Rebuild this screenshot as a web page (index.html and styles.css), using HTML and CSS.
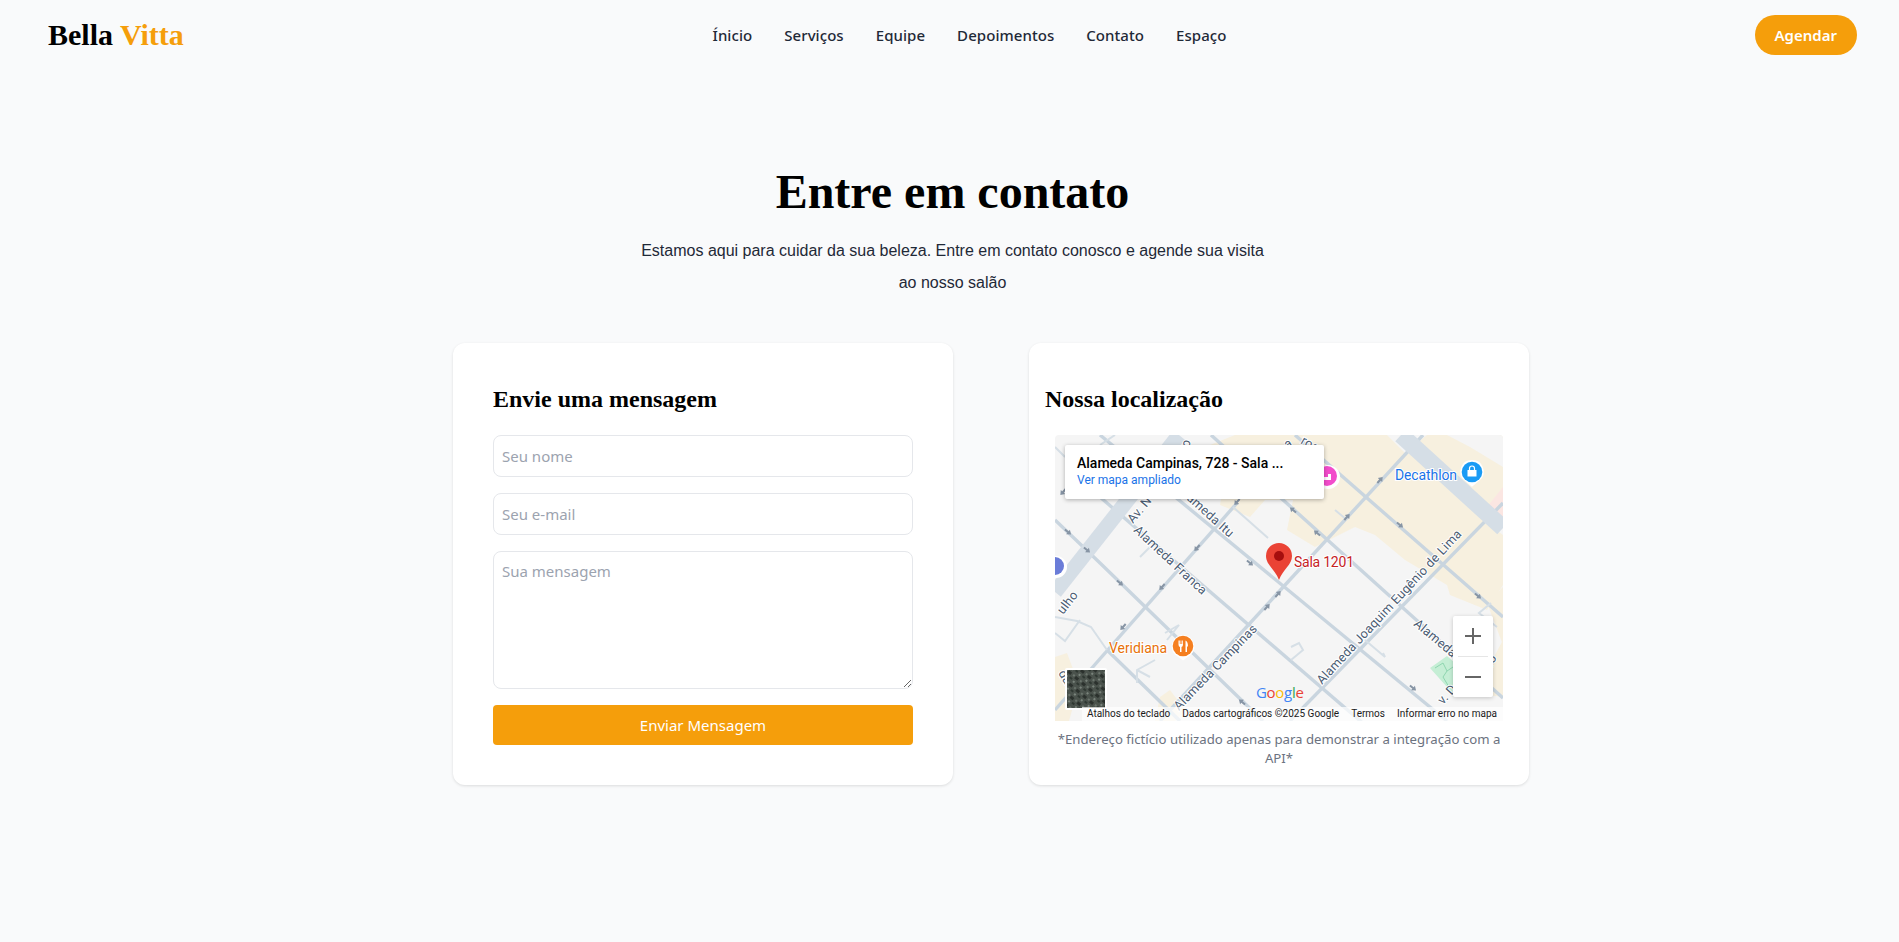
FILE: index.html
```html
<!DOCTYPE html>
<html lang="pt-BR">
<head>
  <meta charset="UTF-8" />
  <meta name="viewport" content="width=device-width, initial-scale=1.0" />
  <title>Bella Vitta</title>
  <link rel="stylesheet" href="styles.css">
</head>
<body>
  <header class="header">
    <a class="logo" href="#">Bella <span>Vitta</span></a>
    <nav class="nav">
      <a href="#">Ínicio</a>
      <a href="#">Serviços</a>
      <a href="#">Equipe</a>
      <a href="#">Depoimentos</a>
      <a href="#">Contato</a>
      <a href="#">Espaço</a>
    </nav>
    <a class="btn-agendar" href="#">Agendar</a>
  </header>

  <main class="contato">
    <h1>Entre em contato</h1>
    <p class="intro">Estamos aqui para cuidar da sua beleza. Entre em contato conosco e agende sua visita<br>ao nosso salão</p>

    <div class="cards">
      <section class="card card-form">
        <h2>Envie uma mensagem</h2>
        <form class="form">
          <input type="text" placeholder="Seu nome" />
          <input type="email" placeholder="Seu e-mail" />
          <textarea placeholder="Sua mensagem"></textarea>
          <button type="button">Enviar Mensagem</button>
        </form>
      </section>

      <section class="card card-mapa">
        <h2>Nossa localização</h2>
        <div class="mapa">
          <svg class="mapa-svg" width="448" height="286" viewBox="0 0 448 286">
            <defs>
              <path id="seta" d="M-4 -1h4v-2l4 3l-4 3v-2h-4z" fill="#8795a5" />
              <pattern id="sat" width="9" height="9" patternUnits="userSpaceOnUse" patternTransform="rotate(40)">
                <rect width="9" height="9" fill="#4a524c" />
                <rect width="4" height="3" fill="#2b312d" />
                <rect x="5" y="4" width="3" height="2" fill="#2f3832" />
                <rect x="1" y="5" width="2" height="2" fill="#79837b" />
                <rect x="6" y="0" width="2" height="2" fill="#6a746c" />
              </pattern>
            </defs>
            <rect width="448" height="286" fill="#f5f5f5" />

            <!-- quadras -->
            <polygon fill="#f7f0df" points="180,0 332,0 350,18 372,0 448,0 448,60 428,85 448,100 448,150 432,175 395,160 392,150 350,125 320,100 300,92 260,112 232,95 238,65 210,65 195,82 165,70 170,40 130,20" />
            <polygon fill="#f5f5f5" points="392,0 448,0 448,32 415,12" />
            <polygon fill="#fbe6e2" points="432,72 448,52 448,88" />
            <polygon fill="#f7f0df" points="0,222 12,218 24,250 14,286 0,286" />
            <polygon fill="#f7f0df" points="105,262 115,255 130,275 120,286 100,286" />
            <polygon fill="#f7f0df" points="432,168 448,152 448,210" />
            <polygon fill="#f7f0df" points="432,235 448,205 448,262 432,260" />
            <polygon fill="#c5eed5" points="375,233 392,221 400,228 398,262 392,252" />
            <path d="M380 233L388 228L392 236L388 242M392 236L398 232M388 242L394 252" fill="none" stroke="#8fd6b0" stroke-width="1" />

            <!-- ruas -->
            <g fill="none" stroke="#c9d5df" stroke-width="3.4">
              <path d="M45 0L392 286" />
              <path d="M45 62L310 290" />
              <path d="M0 85L45 128L208 286" />
              <path d="M156 0L448 263" />
              <path d="M240 0L448 182" />
              <path d="M52 215L125 286" />
              <path d="M448 68L235 286" />
              <path d="M368 0L105 286" />
              <path d="M182 68L0 275" />
            </g>
            <g fill="none" stroke="#d6dfe6" stroke-width="2">
              <path d="M178 72L213 103" />
              <path d="M85 122L95 112" />
              <path d="M280 75L292 85" />
              <path d="M0 182L22 186L36 192L52 215" />
              <path d="M0 198L10 206L25 185" />
              <path d="M82 248L82 235L100 225M82 235L95 242" />
              <path d="M110 198L124 190L112 205" />
              <path d="M236 225L248 215L244 208L236 212" />
              <path d="M310 205L330 222L328 218" />
              <path d="M45 95L52 90" />
              <path d="M436 168L424 178L442 192" />
              <path d="M0 12L10 22M60 0L45 10" />
            </g>
            <path d="M0 157L124 0" fill="none" stroke="#d5dee6" stroke-width="15" />
            <path d="M346 0L448 93" fill="none" stroke="#d5dee6" stroke-width="17" />

            <g class="setas">
              <use href="#seta" transform="translate(13 97) rotate(40)" />
              <use href="#seta" transform="translate(32 115) rotate(40)" />
              <use href="#seta" transform="translate(65 148) rotate(40)" />
              <use href="#seta" transform="translate(195 128) rotate(40)" />
              <use href="#seta" transform="translate(345 90) rotate(40)" />
              <use href="#seta" transform="translate(423 161) rotate(40)" />
              <use href="#seta" transform="translate(358 253) rotate(40)" />
              <use href="#seta" transform="translate(262 98) rotate(220)" />
              <use href="#seta" transform="translate(238 75) rotate(220)" />
              <use href="#seta" transform="translate(187 267) rotate(220)" />
              <use href="#seta" transform="translate(292 82) rotate(-48)" />
              <use href="#seta" transform="translate(325 45) rotate(-48)" />
              <use href="#seta" transform="translate(212 172) rotate(-48)" />
              <use href="#seta" transform="translate(223 159) rotate(-48)" />
              <use href="#seta" transform="translate(107 152) rotate(132)" />
              <use href="#seta" transform="translate(142 113) rotate(132)" />
              <use href="#seta" transform="translate(182 67) rotate(132)" />
              <use href="#seta" transform="translate(68 192) rotate(132)" />
              <use href="#seta" transform="translate(8 57) rotate(132)" />
            </g>

            <!-- nomes das ruas -->
            <g class="rua">
              <text transform="translate(78 89) rotate(-50)">Av. N</text>
              <text transform="translate(8 180) rotate(-52)">ulho</text>
              <text transform="translate(134 13) rotate(-75)">o</text>
              <text transform="translate(131 64) rotate(42)">ameda Itu</text>
              <text transform="translate(78 96) rotate(43)">Alameda Franca</text>
              <text transform="translate(124 276) rotate(-46)">Alameda Campinas</text>
              <text transform="translate(267 250) rotate(-47)">Alameda Joaquim Eugênio de Lima</text>
              <text transform="translate(358 190) rotate(40)">Alameda</text>
              <text transform="translate(3 238) rotate(60)">da</text>
              <text transform="translate(232 14) rotate(-30)">a</text>
              <text transform="translate(245 8) rotate(30)">ros</text>
              <text transform="translate(437 233) rotate(-65)">ro</text>
              <text transform="translate(388 270) rotate(-48)">v. D</text>
            </g>

            <!-- pontos -->
            <g class="poi">
              <path d="M417 26a10.500 10.500 0 0 1 7 18.500l-7 6l-7 -6a10.500 10.500 0 0 1 7 -18.500z" fill="#fff" stroke="#fff" stroke-width="2" />
              <circle cx="417" cy="37" r="10.300" fill="#1a9bf5" />
              <path d="M412.500 35h9v6.500h-9z" fill="#fff" />
              <path d="M414.500 35v-1.500a2.500 2.500 0 0 1 5 0v1.500" fill="none" stroke="#fff" stroke-width="1.200" />
              <circle cx="273" cy="42" r="12" fill="#fff" />
              <circle cx="272" cy="41" r="10" fill="#f24ccb" />
              <path d="M264 39h4v3h5v-3h3v6h-12z" fill="#fff" />
              <circle cx="1" cy="132" r="11" fill="#fff" />
              <circle cx="0" cy="131" r="9" fill="#6a7cd8" />
              <path d="M128 200a11.500 11.500 0 0 1 8 19.500l-8 6l-8 -6a11.500 11.500 0 0 1 8 -19.500z" fill="#fff" />
              <circle cx="128" cy="211" r="10.300" fill="#f57f20" />
              <path d="M123.500 205.500v4q0 2 1.500 2.500v5h1.500v-5q1.500 -.5 1.500 -2.500v-4h-.8v3.500h-.8v-3.500h-.8v3.500h-.8v-3.500zM130.500 205.500q2.500 1 2.500 6h-1v5.500h-1.500z" fill="#fff" />
            </g>
            <path d="M224 108a13 13 0 0 1 13 13c0 9 -9 13 -13 24c-4 -11 -13 -15 -13 -24a13 13 0 0 1 13 -13z" fill="#ea4335" />
            <circle cx="224" cy="121" r="5" fill="#a50e0e" />

            <g class="rotulo">
              <text x="340" y="45" fill="#1a73e8" textLength="62">Decathlon</text>
              <text x="239" y="132" fill="#c5221f" textLength="60">Sala 1201</text>
              <text x="54" y="218" fill="#e8710a" textLength="58">Veridiana</text>
            </g>

            <rect x="10" y="233" width="42" height="42" rx="2" fill="#fff" />
            <rect x="12" y="235" width="38" height="38" fill="url(#sat)" />
          </svg>

          <div class="mapa-info">
            <strong>Alameda Campinas, 728 - Sala ...</strong>
            <a href="#">Ver mapa ampliado</a>
          </div>

          <div class="mapa-zoom">
            <span class="zoom-mais"></span>
            <i></i>
            <span class="zoom-menos"></span>
          </div>

          <div class="mapa-google"><b class="g-blue">G</b><b class="g-red">o</b><b class="g-yellow">o</b><b class="g-blue">g</b><b class="g-green">l</b><b class="g-red">e</b></div>

          <div class="mapa-rodape">
            <span>Atalhos do teclado</span>
            <span>Dados cartográficos ©2025 Google</span>
            <span>Termos</span>
            <span>Informar erro no mapa</span>
          </div>
        </div>
        <p class="aviso">*Endereço fictício utilizado apenas para demonstrar a integração com a API*</p>
      </section>
    </div>
  </main>
</body>
</html>
```

FILE: styles.css
```css
* {
  box-sizing: border-box;
  margin: 0;
  padding: 0;
}

body {
  background-color: #f9fafb;
  color: #1f2937;
  font-family: "Noto Sans", "Open Sans", sans-serif;
  min-height: 100vh;
}

a {
  text-decoration: none;
  color: inherit;
}

/* topo */
.header {
  display: grid;
  grid-template-columns: 1fr auto 1fr;
  align-items: center;
  height: 70px;
  padding: 0 42px 0 48px;
}

.logo {
  font-family: "Liberation Serif", serif;
  font-size: 30px;
  font-weight: bold;
  color: #000;
}

.logo span {
  color: #f59e0b;
}

.nav {
  display: flex;
  gap: 32px;
  font-size: 15px;
  font-weight: 500;
  letter-spacing: 0.06px;
  margin-left: 34px;
}

.btn-agendar {
  justify-self: end;
  height: 40px;
  line-height: 40px;
  padding: 0 20px;
  border-radius: 20px;
  background-color: #f59e0b;
  color: #fff;
  font-size: 15px;
  font-weight: 600;
}

/* contato */
.contato {
  padding: 0 42px 0 48px;
}

h1 {
  font-family: "Liberation Serif", serif;
  font-size: 48px;
  font-weight: bold;
  color: #000;
  text-align: center;
  line-height: 56px;
  margin-top: 94px;
}

.intro {
  font-family: "Liberation Sans", Arial, sans-serif;
  font-size: 16px;
  line-height: 32px;
  text-align: center;
  margin-top: 15px;
}

.cards {
  display: flex;
  gap: 76px;
  margin: 44px 0 0 405px;
}

.card {
  width: 500px;
  height: 442px;
  background-color: #fff;
  border-radius: 12px;
  box-shadow: 0 1px 3px rgba(0, 0, 0, 0.12);
}

.card h2 {
  font-family: "Liberation Serif", serif;
  font-size: 24px;
  font-weight: bold;
  color: #000;
  line-height: 28px;
  margin-bottom: 22px;
}

.card-form {
  padding: 42px 40px 40px;
}

.form {
  display: flex;
  flex-direction: column;
  gap: 16px;
}

input, textarea {
  width: 100%;
  padding: 8px;
  border: 1px solid #e5e7eb;
  border-radius: 8px;
  background-color: #fff;
  font-family: "Noto Sans", "Open Sans", sans-serif;
  font-size: 15px;
  color: #1f2937;
}

input {
  height: 42px;
}

textarea {
  height: 138px;
  padding-top: 9px;
}

input::placeholder, textarea::placeholder {
  color: #9ca3af;
}

button {
  height: 40px;
  border: none;
  border-radius: 4px;
  background-color: #f59e0b;
  color: #fff;
  font-family: "Noto Sans", "Open Sans", sans-serif;
  font-size: 15px;
  cursor: pointer;
}

.card-mapa {
  padding: 42px 16px 0;
}

/* mapa */
.mapa {
  position: relative;
  width: 448px;
  height: 286px;
  margin: 0 auto;
  overflow: hidden;
  border-radius: 4px 4px 0 0;
  font-family: Roboto, sans-serif;
}

.mapa-svg {
  display: block;
}

.rua text {
  font-family: Roboto, sans-serif;
  font-size: 12.7px;
  letter-spacing: 0.2px;
  fill: #4a5b72;
  stroke: #fff;
  stroke-width: 2px;
  paint-order: stroke;
}

.rotulo text {
  font-family: Roboto, sans-serif;
  font-size: 14px;
  stroke: #fff;
  stroke-width: 2px;
  paint-order: stroke;
}

.mapa-info {
  position: absolute;
  top: 10px;
  left: 10px;
  width: 259px;
  height: 54px;
  padding: 9px 12px;
  background-color: #fff;
  box-shadow: 0 1px 4px rgba(0, 0, 0, 0.3);
  border-radius: 2px;
}

.mapa-info strong {
  display: block;
  font-size: 14px;
  font-weight: 500;
  line-height: 18px;
  color: #000;
}

.mapa-info a {
  display: block;
  font-size: 12px;
  line-height: 16px;
  color: #1a73e8;
}

.mapa-zoom {
  position: absolute;
  top: 181px;
  left: 398px;
  width: 40px;
  height: 81px;
  background-color: #fff;
  box-shadow: 0 1px 4px rgba(0, 0, 0, 0.2);
  border-radius: 2px;
}

.mapa-zoom i {
  position: absolute;
  top: 40px;
  left: 5px;
  width: 30px;
  height: 1px;
  background-color: #e6e6e6;
}

.zoom-mais, .zoom-menos {
  position: absolute;
  left: 12px;
  width: 16px;
  height: 2px;
  background-color: #666;
}

.zoom-mais {
  top: 19px;
}

.zoom-mais::after {
  content: "";
  position: absolute;
  left: 7px;
  top: -7px;
  width: 2px;
  height: 16px;
  background-color: #666;
}

.zoom-menos {
  top: 60px;
}

.mapa-google {
  position: absolute;
  top: 247px;
  left: 201px;
  font-family: "Open Sans", sans-serif;
  font-size: 15px;
  line-height: 20px;
  letter-spacing: -0.3px;
}

.mapa-google b {
  font-weight: 500;
}

.g-blue { color: #4285f4; }
.g-red { color: #ea4335; }
.g-yellow { color: #fbbc05; }
.g-green { color: #34a853; }

.mapa-rodape {
  position: absolute;
  right: 0;
  bottom: 0;
  left: 27px;
  display: flex;
  justify-content: flex-end;
  height: 14px;
  font-size: 10px;
  line-height: 14px;
  color: #1a1a1a;
  background-color: rgba(255, 255, 255, 0.7);
}

.mapa-rodape span {
  padding: 0 6px;
  white-space: nowrap;
}

.aviso {
  font-size: 13.2px;
  line-height: 19px;
  color: #6b7280;
  text-align: center;
  margin-top: 9px;
}
```
